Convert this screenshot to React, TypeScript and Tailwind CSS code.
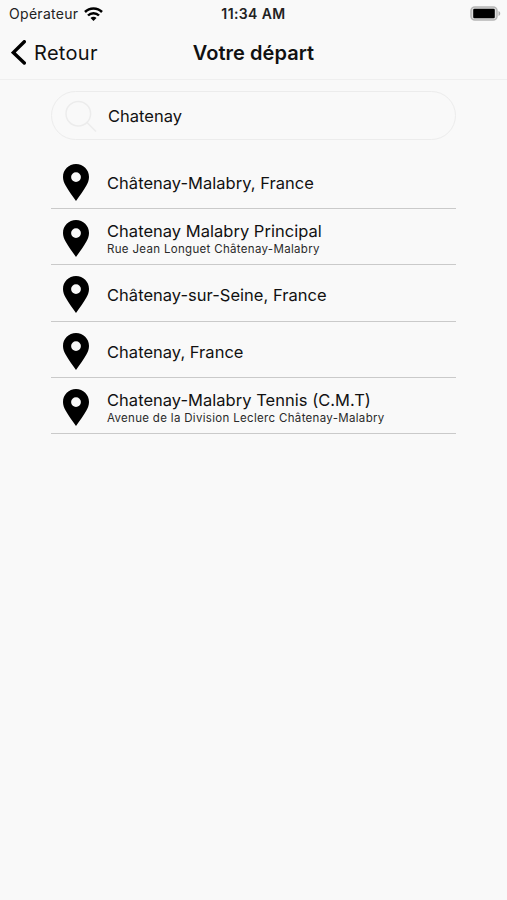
type Place = { title: string; sub?: string };

const places: Place[] = [
  { title: "Châtenay-Malabry, France" },
  { title: "Chatenay Malabry Principal", sub: "Rue Jean Longuet Châtenay-Malabry" },
  { title: "Châtenay-sur-Seine, France" },
  { title: "Chatenay, France" },
  { title: "Chatenay-Malabry Tennis (C.M.T)", sub: "Avenue de la Division Leclerc Châtenay-Malabry" },
];

function Pin() {
  return (
    <svg className="ml-3 h-[37px] w-[26px] shrink-0" viewBox="0 0 26 37">
      <path fillRule="evenodd" d="M13 0C5.800 0 0 5.700 0 12.900c0 3.100 1.100 5.800 2.600 8.500C5.600 26.700 9.600 32 13 37c3.400-5 7.400-10.300 10.400-15.600 1.500-2.700 2.600-5.400 2.600-8.500C26 5.700 20.200 0 13 0Zm0 18a4.900 4.900 0 1 1 0-9.800 4.900 4.900 0 0 1 0 9.800Z" />
    </svg>
  );
}

export default function App() {
  return (
    <div className="h-[900px] w-[507px] overflow-hidden bg-[#f9f9f9] font-['Inter',sans-serif] text-[#111]">
      <header className="h-[80px] border-b border-[#efefef]">
        <div className="grid h-[27px] grid-cols-3 items-center text-[14px]">
          <div className="flex items-center gap-1.5 pl-[9px] text-[#222]">
            <span className="tracking-[0.3px]">Opérateur</span>
            <svg className="h-[14px] w-[19px]" viewBox="0 0 19 14" fill="none" stroke="#000" strokeWidth="2.500">
              <path d="M1 5a12 12 0 0 1 17 0M4 8.500a7.700 7.700 0 0 1 11 0" />
              <path d="m9.500 14-3-3a4.200 4.200 0 0 1 6 0Z" fill="#000" stroke="none" />
            </svg>
          </div>
          <span className="text-center font-semibold tracking-[0.4px] text-[#222]">11:34 AM</span>
          <svg className="mr-[6px] h-[15px] w-[31px] justify-self-end" viewBox="0 0 31 15">
            <rect x="1" y="1" width="26" height="13" rx="3.800" fill="#ddd" stroke="#b5b5b5" strokeWidth="1.500" />
            <rect x="3.200" y="2.800" width="21.600" height="9.400" rx="1.300" />
            <path d="M28.500 5v5c2.300-.8 2.300-4.200 0-5Z" fill="#aaa" />
          </svg>
        </div>
        <div className="grid h-[51px] grid-cols-3 items-center text-[20px]">
          <div className="flex items-center gap-2 pl-[11px]">
            <svg className="h-[26px] w-[15px]" viewBox="0 0 15 26" fill="none" stroke="#000" strokeWidth="3.400" strokeLinecap="round">
              <path d="M13.300 1.700 2.300 12.500 13.300 23" />
            </svg>
            <span className="tracking-[0.3px]">Retour</span>
          </div>
          <h1 className="text-center font-semibold tracking-[0.050px] whitespace-nowrap">Votre départ</h1>
        </div>
      </header>
      <main className="px-[51px] pt-[11px]">
        <div className="flex h-[49px] items-center rounded-full border border-[#ececec] pl-[13px]">
          <svg className="h-8 w-8" viewBox="0 0 32 32" fill="none" stroke="#ececec" strokeWidth="1.500">
            <circle cx="13.300" cy="13.700" r="12.300" />
            <path d="m22 22.500 9 9" />
          </svg>
          <span className="ml-[11px] pt-px text-[16.500px]">Chatenay</span>
        </div>
        <ul className="mt-[13px]">
          {places.map((p) => (
            <li key={p.title} className="flex h-[56.200px] items-center border-b-[1.500px] border-[#cacaca] pt-1">
              <Pin />
              <div className="ml-[18px] pt-px whitespace-nowrap">
                <div className="text-[16.500px] leading-5 tracking-[0.020px]">{p.title}</div>
                {p.sub && <div className="text-[11.500px] leading-4 tracking-[0.320px] text-[#2a2a2a]">{p.sub}</div>}
              </div>
            </li>
          ))}
        </ul>
      </main>
    </div>
  );
}
